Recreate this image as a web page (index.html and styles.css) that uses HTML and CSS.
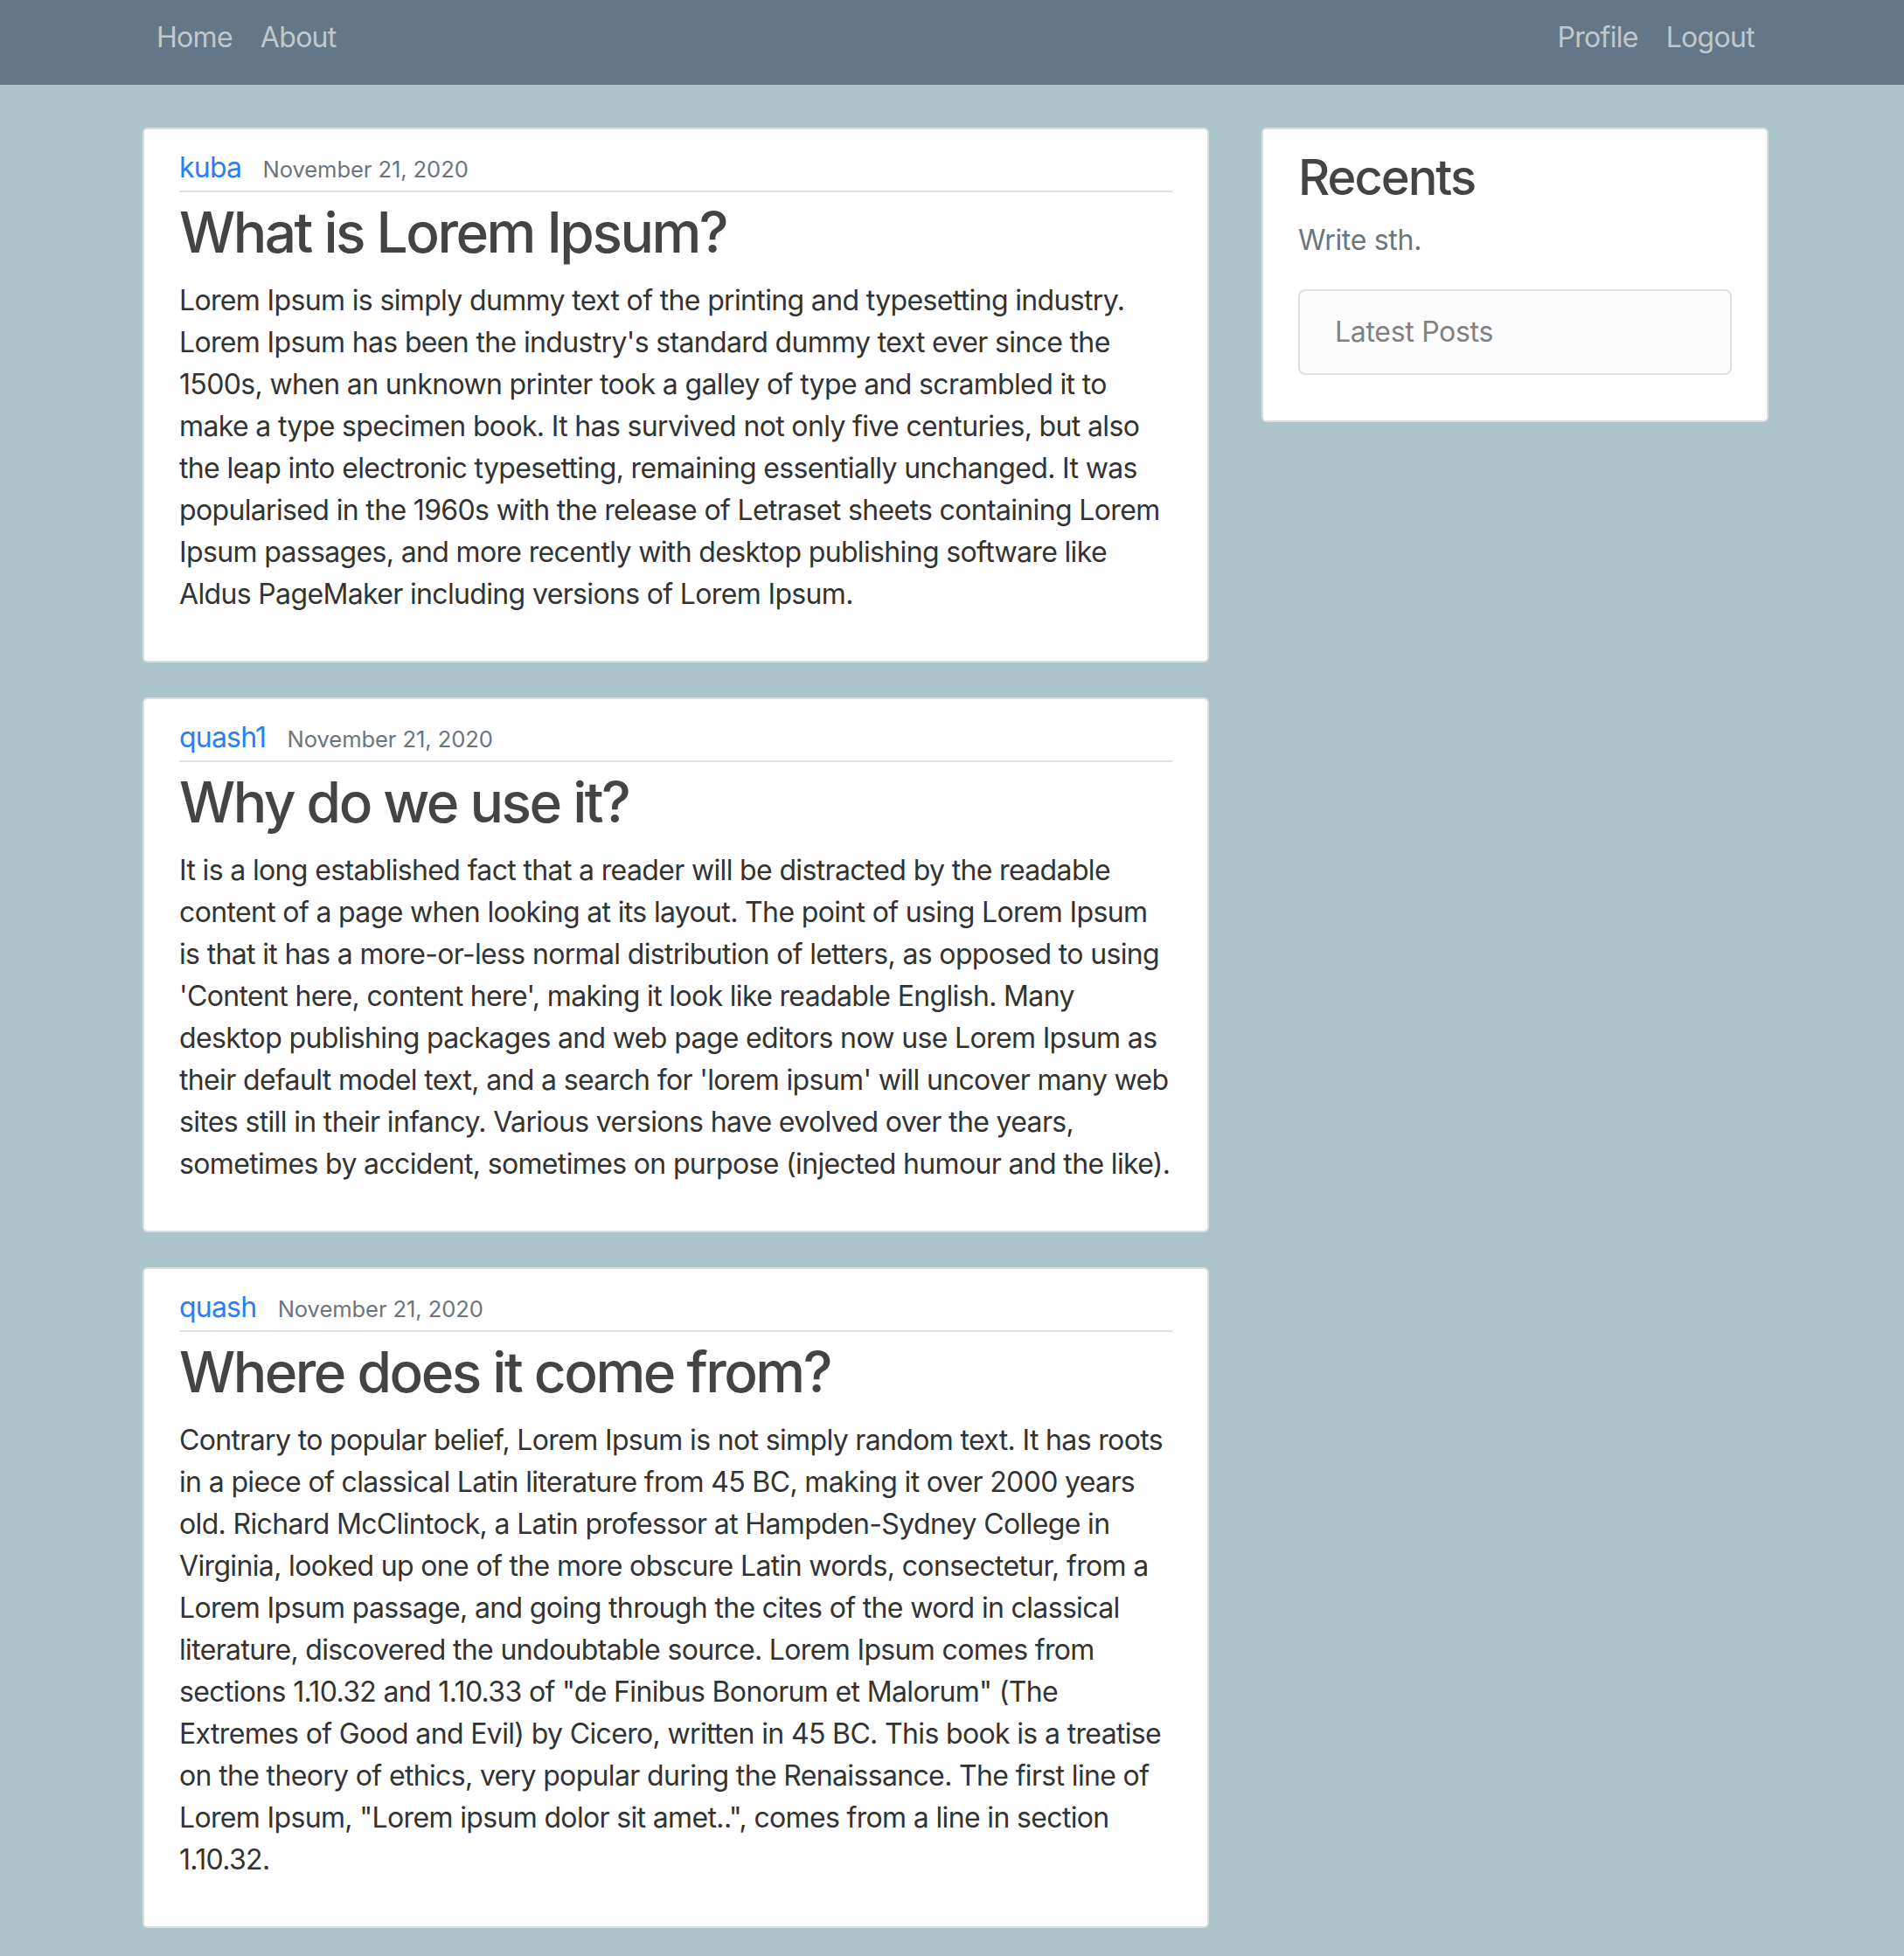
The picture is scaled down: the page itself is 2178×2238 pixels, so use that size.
FILE: index.html
```html
<!DOCTYPE html>
<html lang="en">
<head>
<meta charset="utf-8">
<title>Blog</title>
<link rel="stylesheet" href="styles.css">
</head>
<body>
<header class="navbar">
  <div class="nav-inner">
    <div class="nav-group">
      <a class="nav-link" href="#">Home</a>
      <a class="nav-link" href="#">About</a>
    </div>
    <div class="nav-group">
      <a class="nav-link" href="#">Profile</a>
      <a class="nav-link" href="#">Logout</a>
    </div>
  </div>
</header>
<main class="page">
  <div class="row">
    <div class="col-main">
      <article class="content-section">
        <div class="article-metadata"><a class="author" href="#">kuba</a> <small class="date">November 21, 2020</small></div>
        <h2 class="article-title">What is Lorem Ipsum?</h2>
        <p class="article-content">Lorem Ipsum is simply dummy text of the printing and typesetting industry.<br>Lorem Ipsum has been the industry's standard dummy text ever since the<br>1500s, when an unknown printer took a galley of type and scrambled it to<br>make a type specimen book. It has survived not only five centuries, but also<br>the leap into electronic typesetting, remaining essentially unchanged. It was<br>popularised in the 1960s with the release of Letraset sheets containing Lorem<br>Ipsum passages, and more recently with desktop publishing software like<br>Aldus PageMaker including versions of Lorem Ipsum.</p>
      </article>
      <article class="content-section">
        <div class="article-metadata"><a class="author" href="#">quash1</a> <small class="date">November 21, 2020</small></div>
        <h2 class="article-title">Why do we use it?</h2>
        <p class="article-content">It is a long established fact that a reader will be distracted by the readable<br>content of a page when looking at its layout. The point of using Lorem Ipsum<br>is that it has a more-or-less normal distribution of letters, as opposed to using<br>'Content here, content here', making it look like readable English. Many<br>desktop publishing packages and web page editors now use Lorem Ipsum as<br>their default model text, and a search for 'lorem ipsum' will uncover many web<br>sites still in their infancy. Various versions have evolved over the years,<br>sometimes by accident, sometimes on purpose (injected humour and the like).</p>
      </article>
      <article class="content-section">
        <div class="article-metadata"><a class="author" href="#">quash</a> <small class="date">November 21, 2020</small></div>
        <h2 class="article-title">Where does it come from?</h2>
        <p class="article-content">Contrary to popular belief, Lorem Ipsum is not simply random text. It has roots<br>in a piece of classical Latin literature from 45 BC, making it over 2000 years<br>old. Richard McClintock, a Latin professor at Hampden-Sydney College in<br>Virginia, looked up one of the more obscure Latin words, consectetur, from a<br>Lorem Ipsum passage, and going through the cites of the word in classical<br>literature, discovered the undoubtable source. Lorem Ipsum comes from<br>sections 1.10.32 and 1.10.33 of "de Finibus Bonorum et Malorum" (The<br>Extremes of Good and Evil) by Cicero, written in 45 BC. This book is a treatise<br>on the theory of ethics, very popular during the Renaissance. The first line of<br>Lorem Ipsum, "Lorem ipsum dolor sit amet..", comes from a line in section<br>1.10.32.</p>
      </article>
    </div>
    <aside class="col-side">
      <div class="content-section side">
        <h3 class="side-title">Recents</h3>
        <p class="text-muted">Write sth.</p>
        <ul class="list-group">
          <li class="list-item">Latest Posts</li>
        </ul>
        <p class="spacer"></p>
      </div>
    </aside>
  </div>
</main>
</body>
</html>
```
FILE: styles.css
```css
html, body {
  margin: 0;
  padding: 0;
}
body {
  background: #acc5cb;
  color: #333333;
  font-family: "Inter", "Roboto", "Liberation Sans", sans-serif;
  font-size: 32px;
  line-height: 1.5;
  letter-spacing: -0.65px;
}
.navbar {
  background: #647786;
  height: 97px;
  box-sizing: border-box;
  padding-left: 8px;
}
.nav-inner {
  width: 1920px;
  margin: 0 auto;
  box-sizing: border-box;
  padding: 19px 30px 0;
  display: flex;
  justify-content: space-between;
}
.nav-group {
  display: flex;
}
.nav-link {
  display: block;
  padding: 0 16px;
  line-height: 48px;
  color: rgba(255, 255, 255, 0.6);
  text-decoration: none;
  letter-spacing: -0.7px;
}
.page {
  display: block;
  padding: 49px 0 0 8px;
}
.row {
  width: 1920px;
  margin: 0 auto;
  display: flex;
  align-items: flex-start;
}
.col-main {
  width: 1280px;
  padding: 0 30px;
  box-sizing: border-box;
}
.col-side {
  width: 640px;
  padding: 0 30px;
  box-sizing: border-box;
}
.content-section {
  background: #ffffff;
  padding: 20px 40px;
  border: 2px solid #dddddd;
  border-radius: 6px;
  margin-bottom: 40px;
}
.article-metadata {
  padding-bottom: 2px;
  margin-bottom: 8px;
  border-bottom: 2px solid #e3e3e3;
}
.author {
  color: #2c7cf6;
  text-decoration: none;
  margin-right: 16px;
  letter-spacing: -0.8px;
}
.date {
  font-size: 25.6px;
  color: #6c757d;
  letter-spacing: -0.1px;
}
.article-title {
  margin: 0 0 16px;
  font-size: 64px;
  font-weight: 500;
  line-height: 76px;
  color: #444444;
  letter-spacing: -2.5px;
}
.article-content {
  margin: 0 0 32px;
  white-space: nowrap;
}
.side-title {
  margin: 0 0 12px;
  font-size: 56px;
  font-weight: 500;
  line-height: 71px;
  color: #444444;
  letter-spacing: -2px;
}
.text-muted {
  margin: 0 0 32px;
  color: #6c757d;
  letter-spacing: -0.3px;
}
.list-group {
  list-style: none;
  margin: 0;
  padding: 0;
}
.list-item {
  padding: 23px 40px;
  background: #fcfcfc;
  border: 2px solid #e0e0e0;
  border-radius: 8px;
  color: #818182;
  letter-spacing: -0.3px;
}
.spacer {
  margin: 0 0 32px;
}
```
